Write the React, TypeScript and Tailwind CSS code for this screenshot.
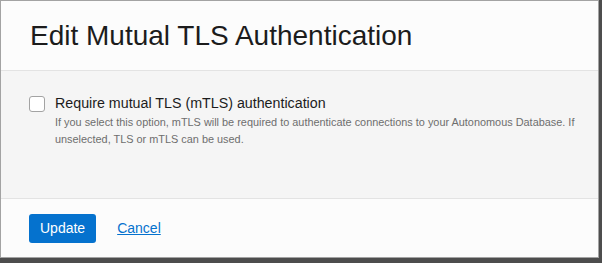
export default function App() {
  return (
    <div className="h-[263px] w-[602px] overflow-hidden bg-[#4d4d4d] font-['Liberation_Sans',Arial,sans-serif]">
      <div className="flex h-[258px] w-[599px] flex-col border border-[#a3a3a3] bg-[#fcfcfc]">
        <header className="flex h-[70px] shrink-0 items-center border-b border-[#e3e3e3] pl-[29px]">
          <h1 className="text-[28px] leading-none text-[#1c1c1c]">Edit Mutual TLS Authentication</h1>
        </header>

        <section className="h-[128px] shrink-0 border-b border-[#e3e3e3] bg-[#f5f5f5] pl-[28px] pr-4 pt-[24px]">
          <label className="flex items-start gap-[10px]">
            <input
              type="checkbox"
              className="mt-[1px] h-4 w-4 shrink-0 appearance-none rounded-[3px] border border-[#a3a3a3] bg-white"
            />
            <div>
              <div className="text-[14.25px] leading-[16px] text-[#1c1c1c]">
                Require mutual TLS (mTLS) authentication
              </div>
              <p className="mt-[3px] text-[10.9px] leading-[17px] text-[#6e6e6e]">
                If you select this option, mTLS will be required to authenticate connections to your Autonomous Database. If
                unselected, TLS or mTLS can be used.
              </p>
            </div>
          </label>
        </section>

        <footer className="flex flex-1 items-center gap-[21px] pl-[28px]">
          <button className="h-[29px] rounded-[3px] bg-[#0572ce] px-[11px] text-[14px] text-white">Update</button>
          <a href="#" className="text-[14px] text-[#0572ce] underline">
            Cancel
          </a>
        </footer>
      </div>
    </div>
  )
}
